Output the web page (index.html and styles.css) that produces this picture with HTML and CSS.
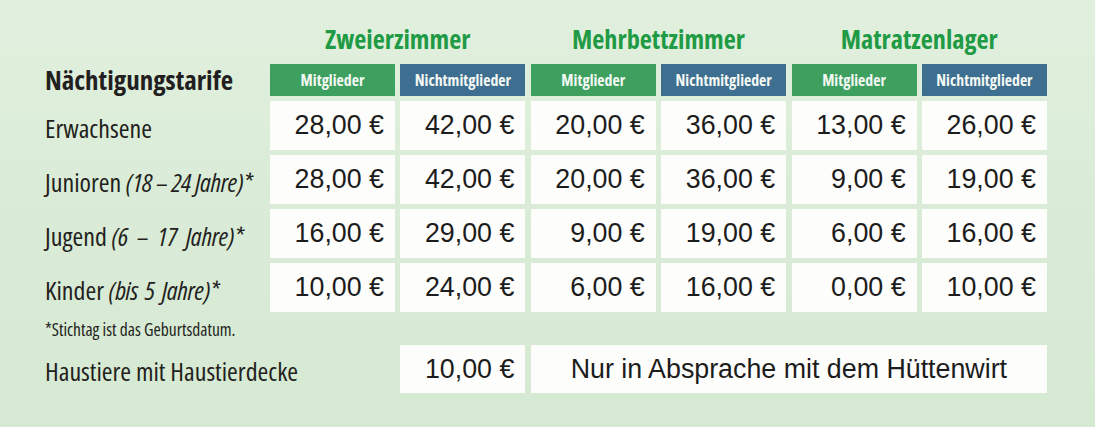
FILE: index.html
```html
<!DOCTYPE html>
<html lang="de">
<head>
<meta charset="utf-8">
<title>Nächtigungstarife</title>
<link rel="stylesheet" href="styles.css">
</head>
<body>
<main class="tarife">
  <div class="blank"></div>
  <div class="group">Zweierzimmer</div>
  <div class="group">Mehrbettzimmer</div>
  <div class="group">Matratzenlager</div>

  <div class="title">Nächtigungstarife</div>
  <div class="head member">Mitglieder</div>
  <div class="head guest">Nichtmitglieder</div>
  <div class="head member">Mitglieder</div>
  <div class="head guest">Nichtmitglieder</div>
  <div class="head member">Mitglieder</div>
  <div class="head guest">Nichtmitglieder</div>

  <div class="label">Erwachsene</div>
  <div class="price">28,00 €</div>
  <div class="price">42,00 €</div>
  <div class="price">20,00 €</div>
  <div class="price">36,00 €</div>
  <div class="price">13,00 €</div>
  <div class="price">26,00 €</div>

  <div class="label">Junioren&nbsp;<i>(18 – 24 Jahre)*</i></div>
  <div class="price">28,00 €</div>
  <div class="price">42,00 €</div>
  <div class="price">20,00 €</div>
  <div class="price">36,00 €</div>
  <div class="price">9,00 €</div>
  <div class="price">19,00 €</div>

  <div class="label">Jugend&nbsp;<i class="spaced">(6 – 17 Jahre)*</i></div>
  <div class="price">16,00 €</div>
  <div class="price">29,00 €</div>
  <div class="price">9,00 €</div>
  <div class="price">19,00 €</div>
  <div class="price">6,00 €</div>
  <div class="price">16,00 €</div>

  <div class="label">Kinder&nbsp;<i class="loose">(bis 5 Jahre)*</i></div>
  <div class="price">10,00 €</div>
  <div class="price">24,00 €</div>
  <div class="price">6,00 €</div>
  <div class="price">16,00 €</div>
  <div class="price">0,00 €</div>
  <div class="price">10,00 €</div>

  <div class="note">*Stichtag ist das Geburtsdatum.</div>

  <div class="label">Haustiere mit Haustierdecke</div>
  <div class="blank"></div>
  <div class="price">10,00 €</div>
  <div class="price wide">Nur in Absprache mit dem Hüttenwirt</div>
</main>
</body>
</html>
```
FILE: styles.css
```css
html, body {
  margin: 0;
  padding: 0;
}
body {
  width: 1095px;
  height: 427px;
  overflow: hidden;
  background: linear-gradient(180deg, #e1f0de 0%, #daecd7 45%, #d6e9d3 100%);
  color: #231f20;
}
.tarife {
  display: grid;
  grid-template-columns: 219.6px repeat(6, 125px);
  grid-template-rows: 34px 32px 49px 49px 49px 49px 23px 48px;
  column-gap: 5.4px;
  row-gap: 5px;
  padding: 25px 0 0 45px;
}
.group {
  grid-column: span 2;
  display: flex;
  align-items: center;
  justify-content: center;
  font-family: "Open Sans", sans-serif;
  font-stretch: 75%;
  font-weight: 700;
  font-size: 26.3px;
  color: #1f9a45;
  padding-bottom: 6px;
}
.title {
  display: flex;
  align-items: center;
  font-family: "Open Sans", sans-serif;
  font-stretch: 75%;
  font-weight: 700;
  font-size: 27px;
  color: #231f20;
  padding-bottom: 1px;
}
.head {
  display: flex;
  align-items: center;
  justify-content: center;
  font-family: "Open Sans", sans-serif;
  font-stretch: 75%;
  font-weight: 700;
  font-size: 15.8px;
  color: #f4f8f4;
}
.member { background: #3da05f; }
.guest { background: #3e6f90; }
.label {
  display: flex;
  align-items: center;
  white-space: nowrap;
  font-family: "Open Sans", sans-serif;
  font-stretch: 75%;
  font-weight: 400;
  font-size: 26px;
  padding-top: 4px;
}
.label i {
  font-style: italic;
  letter-spacing: -0.3px;
}
.label i.spaced {
  word-spacing: 5px;
}
.label i.loose {
  word-spacing: 3px;
}
.price {
  display: flex;
  align-items: center;
  justify-content: flex-end;
  padding-right: 11px;
  background: #fdfdfb;
  font-family: "Liberation Sans", Arial, sans-serif;
  font-size: 26.8px;
  color: #1c1c1c;
}
.wide {
  grid-column: span 4;
  justify-content: center;
  padding-right: 0;
  font-size: 26.8px;
}
.note {
  grid-column: 1 / -1;
  display: flex;
  align-items: center;
  font-family: "Open Sans", sans-serif;
  font-stretch: 75%;
  font-size: 17.5px;
  color: #231f20;
}
```
